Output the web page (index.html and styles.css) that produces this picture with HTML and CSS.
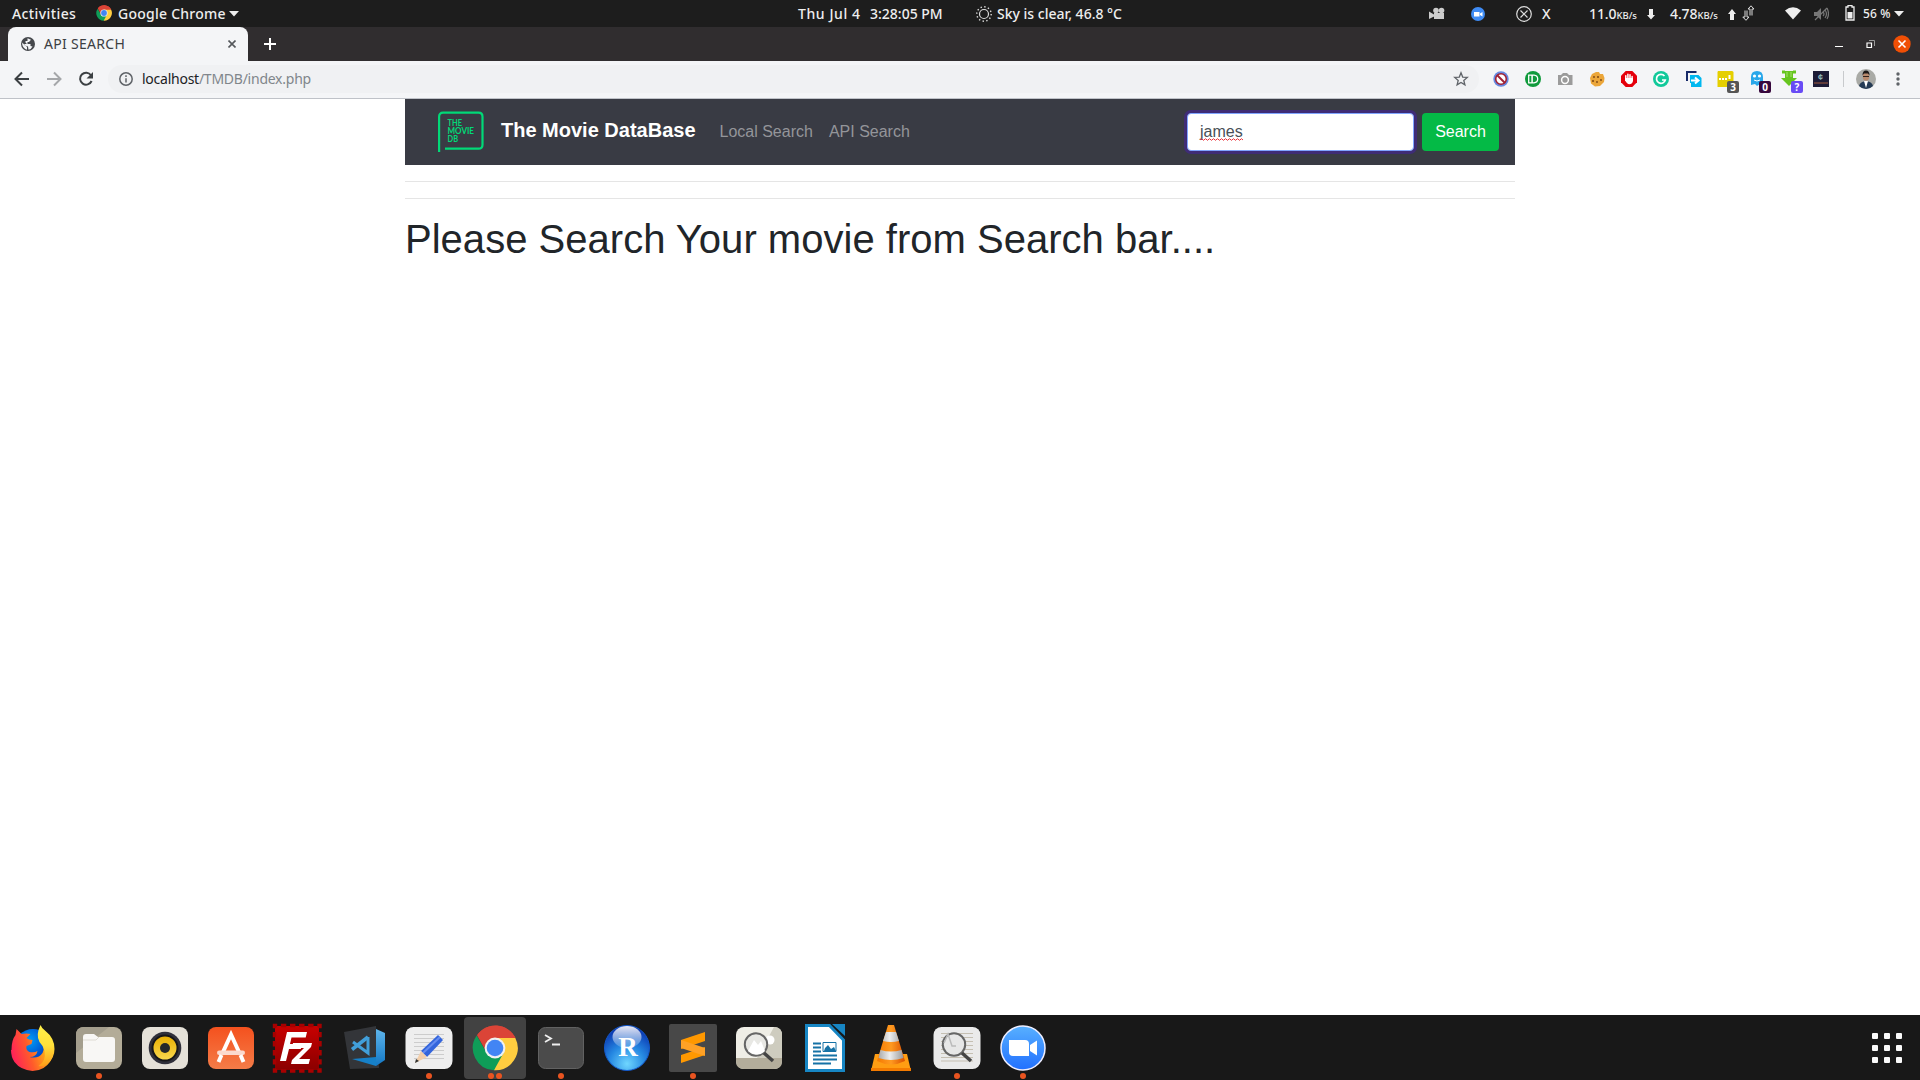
FILE: index.html
```
<!DOCTYPE html>
<html lang="en">
<head>
<meta charset="utf-8">
<title>API SEARCH</title>
<link rel="stylesheet" href="styles.css">
</head>
<body>
<svg class="defs" width="0" height="0">
  <defs>
    <symbol id="chrome" viewBox="0 0 46 46">
      <path d="M23 23 5.5 9.5A22.3 22.3 0 0 1 43.5 13z" fill="#db4437"/>
      <path d="M23 23 23 13H43.3A22.3 22.3 0 0 1 22 45.3z" fill="#ffcd40"/>
      <path d="M23 23 31.5 28 22 45.3A22.3 22.3 0 0 1 4.7 10.500L14.500 27.500z" fill="#0f9d58"/>
      <path d="M5 10.300 14.500 27 18 13h25.300A22.300 22.300 0 0 0 5 10.300z" fill="#db4437"/>
      <circle cx="23" cy="23" r="10.400" fill="#f1f1f1"/><circle cx="23" cy="23" r="8.300" fill="#4285f4"/>
    </symbol>
    <linearGradient id="zoomBlue" x2="0" y2="1"><stop stop-color="#58b0ff"/><stop offset="1" stop-color="#2170ff"/></linearGradient>
    <linearGradient id="foxBody" x1="0" y1=".6" x2="1" y2=".3"><stop stop-color="#ff1f5b"/><stop offset=".4" stop-color="#ff5a2b"/><stop offset=".7" stop-color="#ff9d19"/><stop offset="1" stop-color="#ffc52b"/></linearGradient>
    <linearGradient id="foxTail" x2="0" y2="1"><stop stop-color="#fff04a"/><stop offset=".5" stop-color="#ffe03a"/><stop offset="1" stop-color="#ff9d19"/></linearGradient>
    <radialGradient id="foxBlue" cx=".4" cy=".3"><stop stop-color="#00a0f8"/><stop offset="1" stop-color="#0046c8"/></radialGradient>
    <linearGradient id="orange" x2="0" y2="1"><stop stop-color="#f4511e"/><stop offset="1" stop-color="#f47c48"/></linearGradient>
    <linearGradient id="red" x2="0" y2="1"><stop stop-color="#c80000"/><stop offset="1" stop-color="#8b0000"/></linearGradient>
    <linearGradient id="yellow" x2="0" y2="1"><stop stop-color="#e8ae00"/><stop offset="1" stop-color="#f9d950"/></linearGradient>
    <linearGradient id="vs" x2="0" y2="1"><stop stop-color="#5eb5ec"/><stop offset="1" stop-color="#1277c4"/></linearGradient>
    <radialGradient id="rball" cx=".5" cy=".85" r=".8"><stop stop-color="#6fd6ff"/><stop offset=".5" stop-color="#2588e2"/><stop offset="1" stop-color="#0a35b0"/></radialGradient>
    <linearGradient id="gloss" x2="0" y2="1"><stop stop-color="#fff" stop-opacity=".9"/><stop offset="1" stop-color="#fff" stop-opacity=".15"/></linearGradient>
    <linearGradient id="cone" x2="1"><stop stop-color="#f57900"/><stop offset=".5" stop-color="#ff9a20"/><stop offset="1" stop-color="#d95000"/></linearGradient>
    <linearGradient id="band" x2="1"><stop stop-color="#aaa"/><stop offset=".45" stop-color="#eee"/><stop offset="1" stop-color="#999"/></linearGradient>
  </defs>
</svg>

<header class="topbar">
  <span class="activities">Activities</span>
  <svg class="app-icon" width="16" height="16"><use href="#chrome"/></svg>
  <span class="app-name">Google Chrome</span>
  <svg class="app-caret" width="10" height="6"><path d="M0 0h10L5 5.500z" fill="#eee"/></svg>
  <span class="date">Thu Jul 4</span>
  <span class="time">3:28:05 PM</span>
  <svg class="sun" width="16" height="16" fill="none" stroke="#ddd"><circle cx="8" cy="8" r="4.500" stroke-width="1.200"/><circle cx="8" cy="8" r="7.200" stroke-width="1.400" stroke-dasharray="1.400 2.370"/></svg>
  <span class="weather">Sky is clear, 46.8 °C</span>
  <svg class="cam" width="16" height="14" fill="#ccc"><circle cx="7" cy="3.500" r="2.800"/><circle cx="12.500" cy="3.500" r="2.800"/><path d="M5 6h10v6H5zM0 4.500l5 3v2L0 12z"/></svg>
  <svg class="zoomtray" width="14" height="14"><circle cx="7" cy="7" r="7" fill="#3f8cf5"/><path d="M3 5h5.500v4.500H3zM9 6.500l2.500-1.500v4.500L9 8z" fill="#fff"/></svg>
  <svg class="xcircle" width="16" height="16" fill="none" stroke="#ddd" stroke-width="1.200"><circle cx="8" cy="8" r="7.300"/><path d="m4.500 4.500 7 7m0-7-7 7"/></svg>
  <span class="xletter">X</span>
  <span class="rate down">11.0<small>KB/s</small></span>
  <svg class="dn" width="8" height="11"><path d="M2 0h4v6h2L4 10.500 0 6h2z" fill="#eee"/></svg>
  <span class="rate up">4.78<small>KB/s</small></span>
  <svg class="upa" width="8" height="11"><path d="M2 11h4V5h2L4 0 0 5h2z" fill="#eee"/></svg>
  <svg class="net" width="13" height="16" fill="none" stroke="#ddd"><path d="M3 5.500V12H.8L4 15.300 7 12H5V5.500M8 10.500V4H6L9 .8 12 4h-2v6.500"/></svg>
  <svg class="wifi" width="16" height="13"><path d="M0 3.500Q8-3 16 3.500L8 12.500z" fill="#eee"/></svg>
  <svg class="mute" width="15" height="14" fill="none" stroke="#777"><path d="M0 5h3l4-4v12L3 9H0z" fill="#777" stroke="none"/><path d="M9 5q2 2 0 4m2-6q3 4 0 8m2-10q3 6 0 11M1 13 13 1" stroke-width="1.200"/></svg>
  <svg class="batt" width="10" height="16"><path d="M1 2h2V.7h4V2h2v13H1z" fill="none" stroke="#eee" stroke-width="1.300"/><path d="M2.500 7h5v6.500h-5z" fill="#eee"/></svg>
  <span class="pct">56 %</span>
  <svg class="sys-caret" width="10" height="6"><path d="M0 0h10L5 5.500z" fill="#eee"/></svg>
</header>

<div class="tabstrip">
  <div class="tab">
    <svg width="14" height="14"><circle cx="7" cy="7" r="7" fill="#45484c"/><path d="M6.500 1.300 10 2.800 8 5H6.500v2h3v2l2 .5Q10.500 12 7.500 12.700L7 9.500 4 8.500 1.300 5.500 1.200 7.500Q2 11.500 6 12.700V10L3 7h3L4.500 5.500V4h2z" fill="#f4f5f7"/></svg>
    <span class="tab-title">API SEARCH</span>
    <svg class="tab-close" width="8" height="8" stroke="#55585c" stroke-width="1.600"><path d="m.5.5 7 7m0-7-7 7"/></svg>
  </div>
  <svg class="plus" width="12" height="12" stroke="#fff" stroke-width="2"><path d="M6 0v12M0 6h12"/></svg>
  <div class="winbtns">
    <svg width="8" height="10"><path d="M0 7.500h8" stroke="#fff"/></svg>
    <svg width="9" height="9" fill="none"><path d="M3 .5h5.500V6" stroke="#999"/><path d="M1 3h4.500v4.500H1z" stroke="#fff" stroke-width="1.200"/></svg>
    <svg width="18" height="18"><circle cx="9" cy="9" r="8.700" fill="#f04f05"/><path d="m5.500 5.500 7 7m0-7-7 7" stroke="#fff" stroke-width="1.600"/></svg>
  </div>
</div>

<div class="toolbar">
  <svg class="nav" width="32" height="32" fill="none" stroke="#3c4043" stroke-width="2"><path d="M23 16H10m6-6.500L9.500 16l6.500 6.500"/></svg>
  <svg class="nav" width="32" height="32" fill="none" stroke="#a5a7aa" stroke-width="2"><path d="M9 16h13m-6-6.500 6.500 6.500-6.500 6.500"/></svg>
  <svg class="nav" width="32" height="32"><path d="M21 12.200A6 6 0 1 0 21.600 18" fill="none" stroke="#3c4043" stroke-width="2"/><path d="M23 9v6.500h-6.500z" fill="#3c4043"/></svg>
  <div class="omnibox">
    <svg width="14" height="14" fill="none" stroke="#5f6368" stroke-width="1.500"><circle cx="7" cy="7" r="6.200"/><path d="M7 6.200v4.300M7 3.300v1.600"/></svg>
    <span class="url"><b>localhost</b>/TMDB/index.php</span>
    <svg class="star" width="16" height="16"><path d="m8 1.800 1.700 4.300 4.600.3-3.500 3 1.100 4.500L8 11.400l-3.900 2.500 1.100-4.500-3.500-3 4.600-.3z" fill="none" stroke="#5f6368" stroke-width="1.300"/></svg>
  </div>
  <div class="exts">
    <svg width="32" height="32"><circle cx="16" cy="16" r="7.700" fill="#6689e0"/><circle cx="16" cy="16" r="5.300" fill="#fff" stroke="#a12235" stroke-width="1.600"/><path d="m12 12 8 8" stroke="#a12235" stroke-width="2"/></svg>
    <svg width="32" height="32"><circle cx="16" cy="16" r="8" fill="#109a3c"/><path d="M11.700 12.200h3.500v7.600h-3.500zM15 12.200h2q3.700.3 3.700 3.800T17 19.800h-2z" fill="none" stroke="#fff" stroke-width="1.300"/></svg>
    <svg width="32" height="32"><path d="M9 12h3l2-2h4l2 2h3.500v10H9z" fill="#9b9b9b"/><circle cx="16" cy="17" r="3.400" fill="none" stroke="#fff" stroke-width="1.500"/></svg>
    <svg width="32" height="32"><path d="m15 9 3 0 1 2 3 0 1.500 4-.5 4-4 4-5 .5-4-3L9 15l2-4z" fill="#eba63a"/><g fill="#7a4515"><circle cx="13" cy="14" r=".9"/><circle cx="17" cy="14" r="1"/><circle cx="12" cy="18" r="1"/><circle cx="16" cy="19" r=".9"/><circle cx="20" cy="17" r=".9"/></g></svg>
    <svg width="32" height="32"><path d="M12.700 8h6.600L24 12.700v6.600L19.300 24h-6.600L8 19.300v-6.600z" fill="#e5000b"/><path d="M12.800 16v-3.200m2.100 3.200v-4.700m2.100 4.700v-4.200m2.100 5v-3.200" stroke="#fff" stroke-width="1.500" stroke-linecap="round"/><path d="M12 15h8v3q-.8 3.300-3.800 3.300-2 0-4.200-4z" fill="#fff"/></svg>
    <svg width="32" height="32"><circle cx="16" cy="16" r="8" fill="#11c99a"/><path d="M19.500 13a4.500 4.500 0 1 0 .8 4H17" fill="none" stroke="#fff" stroke-width="1.700"/></svg>
    <svg width="32" height="32"><path d="M19.500 9H10v9" fill="none" stroke="#172a68" stroke-width="2"/><path d="M13 12h8.500l3 3v9H14v-4h-1z" fill="#00b8f0"/><path d="M14 17.500h7m-3-3 3.500 3-3.500 3" stroke="#fff" stroke-width="2" fill="none"/></svg>
    <div class="ext"><svg width="32" height="32"><path d="M9 8h14q1.500 0 1.500 1.500V24H8.500V9z" fill="#e5cf00"/><path d="M10 16h2m1 0h2m1 0h2m2.500-4v4" stroke="#fff" stroke-width="2"/></svg><span class="badge grey">3</span></div>
    <div class="ext"><svg width="32" height="32"><path d="M10 22V14q0-6 6-6t6 6v8l-3-1-3 2-2-2-4 1z" fill="#29a7ea"/><circle cx="13.500" cy="13" r="1.600" fill="#fff"/><circle cx="18.500" cy="13" r="1.600" fill="#fff"/><path d="M13 17q3 2 6 0" stroke="#fff" fill="none"/></svg><span class="badge plum">0</span></div>
    <div class="ext"><svg width="32" height="32"><path d="M12 8h8v7h4l-8 8-8-8h4z" fill="#66c51f"/><path d="M9 9h3m8 0h3" stroke="#66c51f" stroke-width="3"/><path d="M14 9v5m4-5v5" stroke="#a5e16b"/></svg><span class="badge violet">?</span></div>
    <svg width="32" height="32"><path d="M8 8h16v16H8z" fill="#1d1b36"/><text x="15.500" y="17" text-anchor="middle" class="cent">¢</text><path d="M9 20h14" stroke="#a35c3e"/></svg>
  </div>
  <i class="divider"></i>
  <svg class="avatar" width="20" height="20"><circle cx="10" cy="10" r="10" fill="#a9aaa6"/><path d="M3 17q1-4 5-4.500h4q4 .500 5 4.500-3 3-7 3t-7-3z" fill="#253b55"/><path d="m8 12 2 7 2-7z" fill="#fff"/><ellipse cx="10" cy="7.500" rx="3.200" ry="4.300" fill="#b98a6d"/><path d="M6.500 6.500q0-5 3.500-5t3.500 5L12 4.500H8z" fill="#1c1817"/><path d="M7 7.500h6" stroke="#33231c"/></svg>
  <svg class="menu" width="4" height="14" fill="#5f6368"><circle cx="2" cy="2" r="1.700"/><circle cx="2" cy="7" r="1.700"/><circle cx="2" cy="12" r="1.700"/></svg>
</div>

<main class="page">
  <div class="container">
    <nav class="navbar">
      <svg class="logo" width="46" height="42"><path d="M1.100 41V5.700Q1.100 1.700 5.100 1.700h35.400q4 0 4 4v28q0 4-4 4H7" fill="none" stroke="#01d977" stroke-width="2.200"/><g class="logo-text"><text x="9.500" y="15" textLength="14.500" lengthAdjust="spacingAndGlyphs">THE</text><text x="9.500" y="23.200" textLength="26.500" lengthAdjust="spacingAndGlyphs">MOVIE</text><text x="9.500" y="31.200" textLength="10.500" lengthAdjust="spacingAndGlyphs">DB</text></g></svg>
      <a class="brand">The Movie DataBase</a>
      <a class="link">Local Search</a>
      <a class="link">API Search</a>
      <form class="search"><div class="field"><span class="typo">james<svg width="43" height="3"><path d="M0 2 1.500 .700 3.500 2.300 5.500 .700 7.500 2.300 9.500 .700 11.500 2.300 13.500 .700 15.500 2.300 17.500 .700 19.500 2.300 21.500 .700 23.500 2.300 25.500 .700 27.500 2.300 29.500 .700 31.500 2.300 33.500 .700 35.500 2.300 37.500 .700 39.500 2.300 41.500 .700 43 2" fill="none" stroke="#e8343c"/></svg></span></div><button type="button">Search</button></form>
    </nav>
    <hr><hr>
    <h1>Please Search Your movie from Search bar....</h1>
  </div>
</main>

<footer class="dock">
  <div class="item"><svg width="66" height="65"><circle cx="33" cy="33" r="19" fill="url(#foxBlue)"/><path d="M11.500 35Q11.500 25 15.500 20l1-6 5 5q5-1 9 0l-4 4q2 2 6 2l-1 4-5 2q-1 4 3 6 5 1 8-1-1 6-8 6 9 2 13-4 3-6-1-13 8 2 12 13-2 10-10 15-5 3-11 3-12-1-18-9-3.500-5-3.500-12z" fill="url(#foxBody)"/><path d="M40.500 10q1 3 5 6 9 7 9 18 0 9-7 15-5 3-9 2 8-5 6-15-1-5-5-9-4-7 1-17z" fill="url(#foxTail)"/></svg></div>
  <div class="item run"><svg width="66" height="65"><rect x="10" y="12" width="46" height="42" rx="8" fill="#b3ac98"/><path d="M18 12h25L10 38V20q0-8 8-8z" fill="#a49e8d"/><path d="M17 44V22q0-3 3-3h8l4 3h14q3 0 3 3v19q0 3-3 3H20q-3 0-3-3z" fill="#f8f7f5"/><path d="M17 25h13l3-3" fill="none" stroke="#dedbd4"/></svg></div>
  <div class="item"><svg width="66" height="65"><rect x="10" y="12" width="46" height="42" rx="8" fill="#e5e1d8"/><circle cx="33" cy="33" r="16.300" fill="#30303a"/><circle cx="33" cy="33" r="12.500" fill="url(#yellow)" stroke="#171719" stroke-width="2"/><circle cx="33" cy="33" r="5" fill="#25282a"/></svg></div>
  <div class="item"><svg width="66" height="65"><rect x="10" y="12" width="46" height="42" rx="8" fill="url(#orange)"/><path d="m25 37 8-17.500L41 37" fill="none" stroke="#fff" stroke-width="4"/><rect x="19" y="35.500" width="28" height="4.500" rx="2.200" fill="#fbd9cd"/><path d="m23.500 40-3 7m22-7 3 7" stroke="#fff" stroke-width="4"/></svg></div>
  <div class="item"><svg width="66" height="65"><path d="M11 11h44v44H11z" fill="url(#red)"/><rect x="10.500" y="10.500" width="45.500" height="45.500" fill="none" stroke="#a80000" stroke-width="3.400" stroke-dasharray="5.400 3.700" stroke-dashoffset="2.700"/><path d="M16 46 23 17h20l-1.300 5.500H27.500L26 29h12l-1.200 5H25l-3 12z" fill="#fff"/><path d="M29 28h19l-1 4-12 12h11l-1.300 5H27l1-4 12-12H28z" fill="#fff"/></svg></div>
  <div class="item"><svg width="66" height="65"><path d="m14 17 32-6 3 42-29 1z" fill="#333539"/><path d="M46 14 55 18v27l-9 6z" fill="url(#vs)"/><path d="m22 44 24-2v9z" fill="#1680c8"/><path d="M38 22v16L23 27" fill="none" stroke="#419fda" stroke-width="3"/><path d="M38 22 22 34.500" stroke="#419fda" stroke-width="3.500"/></svg></div>
  <div class="item run"><svg width="66" height="65"><rect x="9.500" y="12" width="47" height="42" rx="8" fill="#eee"/><path d="M18 19.500h30M18 23.500h30M18 27.500h30M18 31.500h30M18 35.500h30M18 39.500h30M18 43.500h30" stroke="#ccc"/><path d="m25 36 17-16 5 5-16 17z" fill="#3365dc"/><path d="m27 38 17-16" stroke="#648cf0" stroke-width="2"/><path d="m25 36 6 6-12 6z" fill="#f3cfab"/><path d="m20 44-1 4 4-2z" fill="#333"/></svg></div>
  <div class="item active run2"><svg width="66" height="65"><use href="#chrome" x="10" y="10" width="46" height="46"/></svg></div>
  <div class="item run"><svg width="66" height="65"><rect x="10.500" y="12.500" width="45" height="41" rx="7" fill="#4b4b4b" stroke="#626262"/><path d="m17 20 6 3.500-6 3.500m7 2.500h8" fill="none" stroke="#eee" stroke-width="1.800"/></svg></div>
  <div class="item"><svg width="66" height="65"><circle cx="33" cy="33" r="22.500" fill="url(#rball)" stroke="#1258cc"/><ellipse cx="33" cy="22" rx="14.500" ry="11" fill="url(#gloss)"/><text x="34" y="41" text-anchor="middle" class="r-letter">R</text></svg></div>
  <div class="item run"><svg width="66" height="65"><rect x="9" y="9" width="48" height="48" rx="2" fill="#484848"/><path d="m21 25 24-8v9l-24 8z" fill="#ff9800"/><path d="m21 40 24-8v8l-24 8z" fill="#ff9800"/><path d="m21 25 24 8v8l-24-8z" fill="#ffa126"/></svg></div>
  <div class="item"><svg width="66" height="65"><rect x="10" y="12" width="46" height="42" rx="8" fill="#efeee6"/><path d="M48 12q8 0 8 8v23H31z" fill="#ceccbf"/><path d="M10 43h46v3q0 8-8 8H18q-8 0-8-8z" fill="#b3ad9b"/><circle cx="44" cy="25" r="4.500" fill="#fff"/><circle cx="30" cy="29.500" r="11.200" fill="#e8e8e4" stroke="#666" stroke-width="2"/><path d="m22 36 6-11 4 5 3-4 4 10q-7 7-17 0z" fill="#fff"/><path d="m38 38 9 8" stroke="#444" stroke-width="3.500"/></svg></div>
  <div class="item"><svg width="66" height="65"><path d="M14.500 10.500h23L51.500 25v30.500h-37z" fill="#fff" stroke="#1786c4" stroke-width="3"/><path d="M40 9h13v12z" fill="#1786c4"/><path d="M21 28.500h8m-8 4h8m-8 4h8m-8 4h24m-24 4h24m-24 4h18" stroke="#1672a6" stroke-width="2"/><path d="M31 27.500h13v9H31z" fill="#fff" stroke="#1672a6"/><path d="m32 36 1-3 3-3 3 4 3-2 2 4z" fill="#1672a6"/></svg></div>
  <div class="item"><svg width="66" height="65"><path d="M17 39h32l4 17H13z" fill="#ff9d12"/><path d="M13 53h40v3H13z" fill="#f47b00"/><path d="M30 10h6l11 36q-14 7-28 0z" fill="url(#cone)"/><path d="M28 17h10l3 9q-8 2-16 0zM22.500 35q10.500 3 21 0l2 8q-12.500 4-25 0z" fill="url(#band)"/></svg></div>
  <div class="item run"><svg width="66" height="65"><rect x="9.500" y="12" width="47" height="42" rx="8" fill="#eaeaea"/><path d="M17 18.500h32M17 22.500h32M17 26.500h32M17 30.500h32M17 34.500h32M17 38.500h32M17 42.500h32M17 46h32" stroke="#c5bfb2"/><circle cx="30" cy="29.500" r="11.200" fill="#e7e7e7" stroke="#666" stroke-width="2"/><path d="m20 28 4-9 4 12h4" fill="none" stroke="#bbb" stroke-width="1.500"/><path d="m38 38 9 8" stroke="#444" stroke-width="3.500"/></svg></div>
  <div class="item run"><svg width="66" height="65"><circle cx="33" cy="33" r="22" fill="url(#zoomBlue)" stroke="#eef" stroke-width="1.500"/><path d="M19 25h16q4 0 4 4v12H23q-4 0-4-4zM40 30l7-4.500v15L40 36z" fill="#fff"/></svg></div>
  <svg class="apps" width="30" height="30" fill="#fafafa"><g id="dots"><rect width="6" height="6" rx="1"/><rect x="12" width="6" height="6" rx="1"/><rect x="24" width="6" height="6" rx="1"/></g><use href="#dots" y="12"/><use href="#dots" y="24"/></svg>
</footer>
</body>
</html>
```
FILE: styles.css
```
* { box-sizing: border-box; }
body {
  margin: 0;
  width: 1920px;
  height: 1080px;
  overflow: hidden;
  display: flex;
  flex-direction: column;
  background: #fff;
  font-family: "Noto Sans", sans-serif;
}
svg { display: block; flex: none; }
.defs { position: absolute; }

/* Desktop panel */
.topbar {
  height: 27px;
  flex: none;
  display: flex;
  align-items: center;
  background: #1d1d1d;
  color: #eee;
  font-size: 14px;
  font-weight: 500;
  line-height: 27px;
  white-space: nowrap;
}
.topbar span { flex: none; }
.activities { width: 84px; padding-left: 12px; letter-spacing: .4px; }
.app-icon { margin-left: 12px; margin-top: -1px; }
.app-name { width: 111px; margin-left: 6px; letter-spacing: .25px; }
.date { width: 72px; margin-left: 559px; letter-spacing: .6px; }
.time { width: 106px; letter-spacing: 0; }
.weather { width: 427px; margin-left: 5px; letter-spacing: 0; }
.cam { margin-left: 5px; }
.zoomtray { margin-left: 26px; }
.xcircle { margin-left: 31px; }
.xletter { width: 48px; margin-left: 10px; }
.rate { width: 58px; letter-spacing: -.1px; padding-top: 2px; }
.rate small { font-size: 9.500px; letter-spacing: 0; }
.down { margin-left: -1px; }
.dn { margin-top: 2px; }
.up { margin-left: 15px; width: 58px; }
.upa { margin-top: 2px; }
.net { margin-left: 6px; margin-top: -1px; }
.wifi { margin-left: 30px; }
.mute { margin-left: 13px; }
.batt { margin-left: 16px; margin-top: -1px; }
.pct { margin-left: 8px; width: 31px; font-size: 12px; letter-spacing: .1px; }

/* Browser window */
.tabstrip {
  height: 34px;
  flex: none;
  display: flex;
  align-items: center;
  padding: 0 9px 0 8px;
  background: #302d2f;
}
.tab {
  width: 240px;
  height: 34px;
  display: flex;
  align-items: center;
  padding: 0 12px 0 13px;
  border-radius: 8px 8px 0 0;
  background: #f4f5f7;
}
.tab-title { margin: -2px 0 0 9px; color: #3c4043; font-size: 14px; letter-spacing: .3px; }
.tab-close { margin-left: auto; }
.plus { margin-left: 16px; }
.winbtns { display: flex; align-items: center; margin-left: auto; gap: 18px; }
.winbtns svg:first-child { margin-right: 5px; }
.toolbar {
  height: 38px;
  flex: none;
  display: flex;
  align-items: center;
  padding: 0 20px 2px 6px;
  border-bottom: 1px solid #bfc2c8;
  background: #f4f5f7;
}
.omnibox {
  width: 1371px;
  height: 28px;
  margin-left: 6px;
  padding: 0 10px 0 11px;
  display: flex;
  align-items: center;
  border-radius: 14px;
  background: #f0f1f3;
}
.url { margin-left: 9px; color: #80868b; font-size: 14px; letter-spacing: -.25px; }
.url b { font-weight: 400; color: #202124; }
.star { margin-left: auto; }
.exts { display: flex; margin-left: 6px; }
.ext { position: relative; }
.badge {
  position: absolute;
  left: 18px;
  top: 18px;
  width: 12px;
  height: 12px;
  border-radius: 2px;
  color: #fff;
  font: bold 10px/12px "Noto Sans", sans-serif;
  text-align: center;
}
.grey { background: #555; }
.plum { background: #36063c; }
.violet { background: #684bf5; }
.cent { font: bold 9px "Liberation Sans", sans-serif; fill: #9bb; }
.divider { width: 1px; height: 16px; margin-left: 6px; background: #c8cacd; }
.avatar { margin-left: 12px; }
.menu { margin-left: auto; }

/* Page content */
.page { flex: 1; font-family: "Liberation Sans", Arial, sans-serif; color: #212529; }
.container { width: 1110px; margin: 0 auto; }
.navbar {
  height: 66px;
  display: flex;
  align-items: center;
  padding: 0 16px;
  background: #393b44;
  white-space: nowrap;
}
.logo { margin: 0 16px 0 17px; }
.logo-text { font: 700 8.500px Lato, sans-serif; fill: #01d977; }
.brand { margin: -3px 24px 0 1px; width: 194.500px; font-size: 20px; font-weight: 700; color: #fff; }
.link { margin-right: 16px; font-size: 16px; color: #94959a; }
.search { display: flex; margin: 0 0 0 auto; gap: 8px; }
.field {
  width: 227px;
  height: 38px;
  padding: 0 12px;
  border: 1px solid #80a5ff;
  border-radius: 4px;
  background: #fff;
  box-shadow: 0 0 0 3px #3f2c76;
  color: #495057;
  font-size: 16px;
  line-height: 36px;
}
.typo { position: relative; }
.typo svg { position: absolute; left: 0; bottom: -1px; }
.search button {
  width: 77px;
  height: 38px;
  padding: 0;
  border: 0;
  border-radius: 4px;
  background: #04ba46;
  color: #fff;
  font: 16px "Liberation Sans", Arial, sans-serif;
}
hr { margin: 16px 0; border: 0; border-top: 1px solid #e5e5e5; }
h1 { margin: 0; font-size: 40px; font-weight: 400; line-height: 48px; letter-spacing: .02px; }

/* Dock */
.dock { height: 65px; flex: none; display: flex; align-items: center; background: #181818; }
.item { position: relative; width: 66px; height: 65px; }
.active { background: #424242; border-radius: 4px; width: 62px; height: 62px; margin: 1px 2px 0; }
.active svg { margin: -2px; }
.r-letter { font: bold 27px "Liberation Serif", serif; fill: #fff; }
.run::after, .run2::after {
  content: "";
  position: absolute;
  left: 30px;
  top: 58px;
  width: 6px;
  height: 6px;
  border-radius: 50%;
  background: #e95420;
}
.run2::after { left: 24px; top: 56px; box-shadow: 8px 0 #e95420; }
.apps { margin: 1px 18px 0 auto; }
```
